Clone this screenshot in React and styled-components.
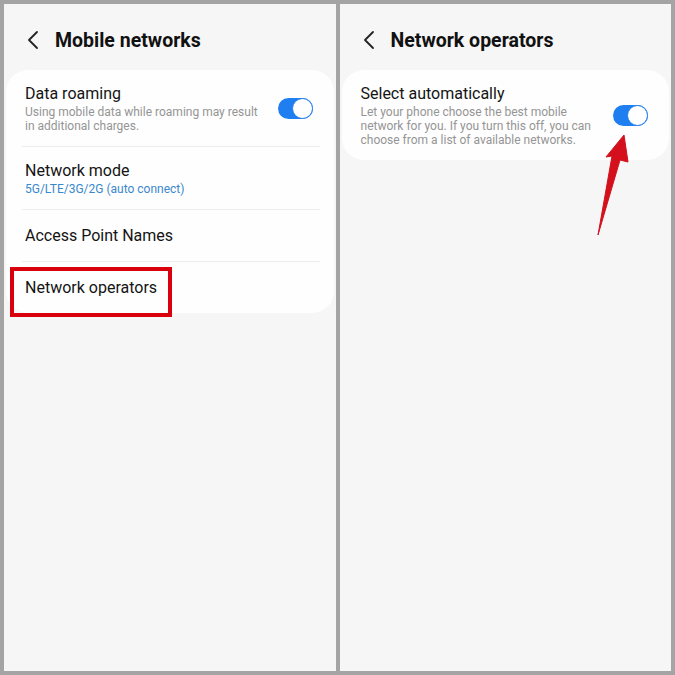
import React from "react";
import styled, { createGlobalStyle } from "styled-components";

const GlobalStyle = createGlobalStyle`
  html, body {
    margin: 0;
    padding: 0;
    background: #a4a4a4;
  }
  body {
    font-family: Roboto, "Noto Sans", "Liberation Sans", sans-serif;
    -webkit-font-smoothing: antialiased;
  }
`;

const Page = styled.div`
  width: 675px;
  height: 675px;
  box-sizing: border-box;
  padding: 4px;
  display: flex;
  gap: 4px;
  background: #a4a4a4;
`;

const Screen = styled.div`
  position: relative;
  flex: 1;
  background: #f6f6f6;
  display: flex;
  flex-direction: column;
`;

const Header = styled.div`
  height: 66px;
  box-sizing: border-box;
  padding: 6px 0 0 23px;
  display: flex;
  align-items: center;
  gap: 16px;
`;

const Title = styled.h1`
  margin: 0;
  font-size: 19.5px;
  font-weight: 700;
  color: #111;
`;

const Card = styled.div`
  margin: 0 2px;
  background: #fefefe;
  border-radius: 22px;
  display: flex;
  flex-direction: column;
`;

const Row = styled.div`
  position: relative;
  min-height: ${(p) => (p.single ? "51px" : "auto")};
  box-sizing: border-box;
  padding: 14px 21px 14px 19px;
  display: flex;
  align-items: center;
  gap: 12px;
`;

const RowText = styled.div`
  flex: 1;
  display: flex;
  flex-direction: column;
`;

const RowTitle = styled.div`
  font-size: 16px;
  line-height: 20px;
  color: #141414;
`;

const RowSub = styled.div`
  font-size: 12px;
  line-height: 14px;
  margin-top: 1px;
  margin-bottom: -1px;
  color: ${(p) => (p.accent ? "#3a88cc" : "#959595")};
`;

const Divider = styled.div`
  height: 1px;
  margin: 0 14px 0 16px;
  background: #ececec;
`;

const Toggle = styled.div`
  width: 35px;
  height: 21px;
  flex: none;
  border-radius: 11px;
  background: #1f7ef0;
  display: flex;
  justify-content: flex-end;
`;

const Knob = styled.div`
  width: 21px;
  height: 21px;
  box-sizing: border-box;
  border-radius: 50%;
  background: #fff;
  border: 1.5px solid #1f7ef0;
`;

const Highlight = styled.div`
  position: absolute;
  left: 4px;
  top: 5px;
  width: 162px;
  height: 50px;
  box-sizing: border-box;
  border: 4px solid #d8000c;
`;

const Arrow = styled.svg`
  position: absolute;
  left: 250px;
  top: 125px;
`;

const Back = () => (
  <svg width="12" height="20" viewBox="0 0 12 20">
    <polyline
      points="10,2 2,10 10,18"
      fill="none"
      stroke="#222"
      strokeWidth="1.8"
      strokeLinecap="round"
      strokeLinejoin="round"
    />
  </svg>
);

const Switch = () => (
  <Toggle>
    <Knob />
  </Toggle>
);

export default function App() {
  return (
    <>
      <GlobalStyle />
      <Page>
        <Screen>
          <Header>
            <Back />
            <Title>Mobile networks</Title>
          </Header>
          <Card>
            <Row>
              <RowText>
                <RowTitle>Data roaming</RowTitle>
                <RowSub>
                  Using mobile data while roaming may result
                  <br />
                  in additional charges.
                </RowSub>
              </RowText>
              <Switch />
            </Row>
            <Divider />
            <Row>
              <RowText>
                <RowTitle>Network mode</RowTitle>
                <RowSub accent>5G/LTE/3G/2G (auto connect)</RowSub>
              </RowText>
            </Row>
            <Divider />
            <Row single>
              <RowText>
                <RowTitle>Access Point Names</RowTitle>
              </RowText>
            </Row>
            <Divider />
            <Row single>
              <RowText>
                <RowTitle>Network operators</RowTitle>
              </RowText>
              <Highlight />
            </Row>
          </Card>
        </Screen>
        <Screen>
          <Header>
            <Back />
            <Title>Network operators</Title>
          </Header>
          <Card>
            <Row>
              <RowText>
                <RowTitle>Select automatically</RowTitle>
                <RowSub>
                  Let your phone choose the best mobile
                  <br />
                  network for you. If you turn this off, you can
                  <br />
                  choose from a list of available networks.
                </RowSub>
              </RowText>
              <Switch />
            </Row>
          </Card>
          <Arrow width="50" height="115" viewBox="0 0 50 115">
            <polygon
              points="34,6 38,33 30,31 8,106 22,27 16,28"
              fill="#d3101c"
              stroke="#d3101c"
              strokeWidth="1"
              strokeLinejoin="round"
            />
          </Arrow>
        </Screen>
      </Page>
    </>
  );
}
